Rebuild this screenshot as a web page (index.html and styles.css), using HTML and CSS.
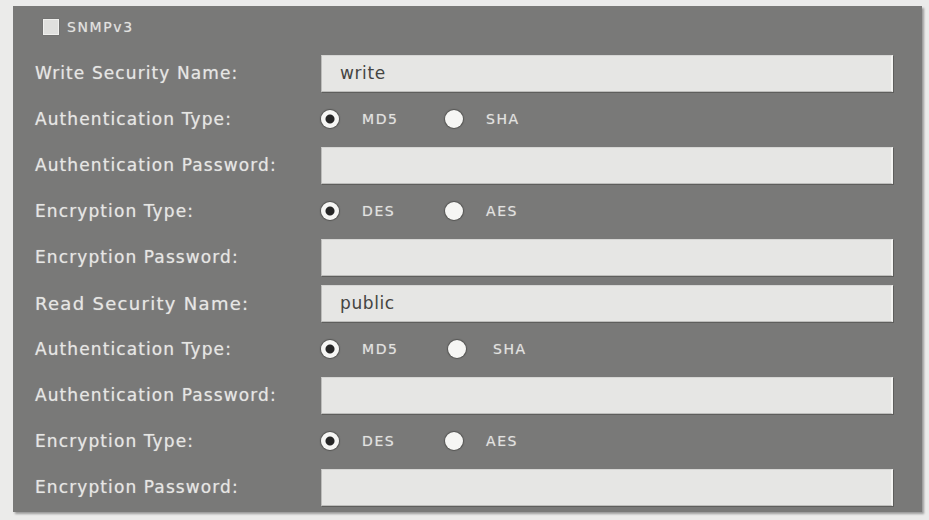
FILE: index.html
```html
<!DOCTYPE html>
<html lang="en">

<head>
    <meta charset="UTF-8">
    <meta name="viewport" content="width=device-width, initial-scale=1.0">
    <title>SNMPv3</title>
    <link rel="stylesheet" href="styles.css">
</head>

<body>
    <div class="panel">
        <div class="head">
            <span class="check"></span>
            <span class="small">SNMPv3</span>
        </div>

        <form class="grid" action="#">
            <label class="label">Write Security Name:</label>
            <div class="field"><div class="input">write</div></div>

            <label class="label">Authentication Type:</label>
            <div class="field radios">
                <span class="radio on"></span><span class="small opt">MD5</span>
                <span class="radio"></span><span class="small">SHA</span>
            </div>

            <label class="label">Authentication Password:</label>
            <div class="field"><div class="input"></div></div>

            <label class="label">Encryption Type:</label>
            <div class="field radios">
                <span class="radio on"></span><span class="small opt">DES</span>
                <span class="radio"></span><span class="small">AES</span>
            </div>

            <label class="label">Encryption Password:</label>
            <div class="field"><div class="input"></div></div>

            <label class="label big">Read Security Name:</label>
            <div class="field"><div class="input">public</div></div>

            <label class="label">Authentication Type:</label>
            <div class="field radios">
                <span class="radio on"></span><span class="small opt wide">MD5</span>
                <span class="radio"></span><span class="small">SHA</span>
            </div>

            <label class="label">Authentication Password:</label>
            <div class="field"><div class="input"></div></div>

            <label class="label">Encryption Type:</label>
            <div class="field radios">
                <span class="radio on"></span><span class="small opt">DES</span>
                <span class="radio"></span><span class="small">AES</span>
            </div>

            <label class="label">Encryption Password:</label>
            <div class="field"><div class="input"></div></div>
        </form>
    </div>
</body>

</html>
```

FILE: styles.css
```css
* {
    margin: 0;
    padding: 0;
    box-sizing: border-box;
}

body {
    background: #ebebea;
    padding: 6px 7px 8px 13px;
    font-family: "DejaVu Sans", Verdana, sans-serif;
}

.panel {
    width: 909px;
    height: 506px;
    background: #797978;
    box-shadow: 2px 2px 2px #9a9a9a;
    padding-left: 22px;
}

.head {
    height: 44px;
    display: flex;
    align-items: center;
    padding-left: 8px;
    padding-bottom: 2px;
}

.check {
    width: 16px;
    height: 16px;
    background: #e0e0de;
    border: 1px solid #f0f0ee;
    box-shadow: 0 0 1px #5a5a58;
    margin-right: 8px;
}

.small {
    font-size: 14px;
    color: #e2e2e0;
    letter-spacing: 1.6px;
    text-shadow: 0 0 1px #b0b0ae;
}

.grid {
    display: grid;
    grid-template-columns: 286px 572px;
    grid-auto-rows: 46px;
}

.label {
    display: flex;
    align-items: center;
    font-size: 17px;
    letter-spacing: 1.1px;
    color: #e6e6e4;
    text-shadow: 0 0 1px #b8b8b6;
}

.label.big {
    font-size: 18px;
    letter-spacing: 1.3px;
}

.field {
    display: flex;
    align-items: center;
}

.input {
    width: 100%;
    height: 37px;
    background: #e6e6e4;
    border: 1px solid #bdbdbb;
    border-top-color: #d6d6d4;
    border-right: 2px solid #f4f4f2;
    box-shadow: 1px 1px 0 #5e5e5c;
    padding-left: 18px;
    line-height: 35px;
    font-size: 17px;
    letter-spacing: 0.6px;
    color: #444442;
}

.radios .radio {
    width: 18px;
    height: 18px;
    border-radius: 50%;
    background: #f6f6f4;
    box-shadow: 0 0 1px 1px #555553;
}

.radios .radio.on {
    background: radial-gradient(circle, #262626 0 4px, #f6f6f4 5px);
}

.radios .radio + .small {
    margin-left: 23px;
}

.radios .opt {
    width: 83px;
}

.radios .opt.wide {
    width: 86px;
}

.radios .opt.wide + .radio + .small {
    margin-left: 27px;
}
```
